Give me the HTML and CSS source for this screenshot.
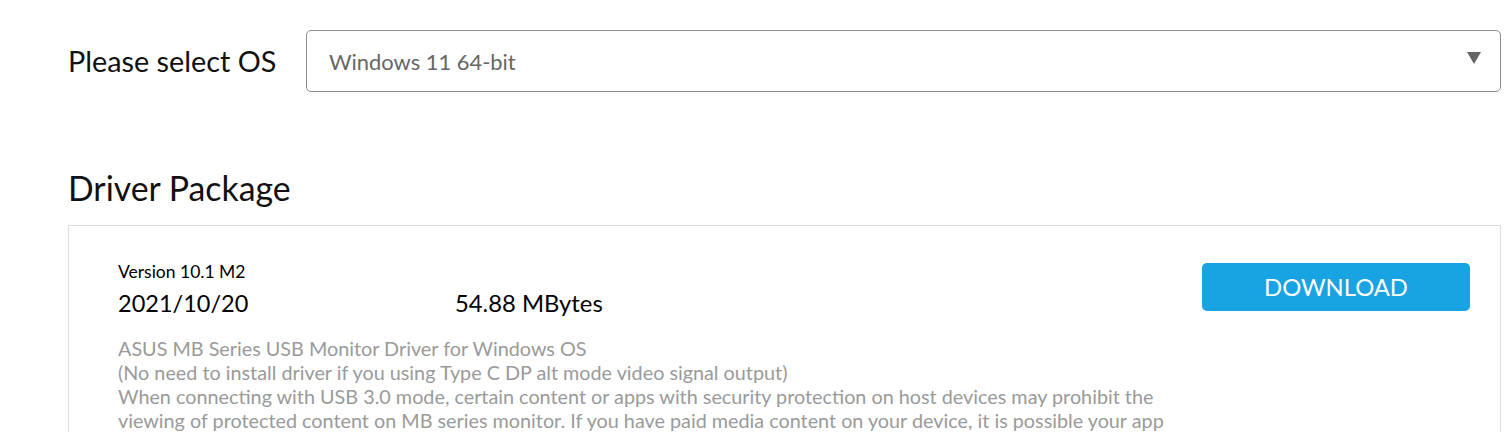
FILE: index.html
```html
<!DOCTYPE html>
<html lang="en">
<head>
<meta charset="utf-8">
<title>Driver Download</title>
<link rel="stylesheet" href="styles.css">
</head>
<body>
<div class="page">
  <div class="os-row">
    <label class="os-label">Please select OS</label>
    <div class="select">
      <span class="select-value">Windows 11 64-bit</span>
      <svg class="select-arrow" width="14" height="12" viewBox="0 0 14 12"><path d="M0 0H14L7 12Z" fill="#666"/></svg>
    </div>
  </div>
  <h2 class="section-title">Driver Package</h2>
  <div class="card">
    <div class="card-head">
      <div class="meta">
        <div class="version">Version 10.1 M2</div>
        <div class="meta-row">
          <span class="date">2021/10/20</span>
          <span class="size">54.88 MBytes</span>
        </div>
      </div>
      <button class="download">DOWNLOAD</button>
    </div>
    <div class="desc">
      ASUS MB Series USB Monitor Driver for Windows OS<br>
      (No need to install driver if you using Type C DP alt mode video signal output)<br>
      When connecting with USB 3.0 mode, certain content or apps with security protection on host devices may prohibit the<br>
      viewing of protected content on MB series monitor. If you have paid media content on your device, it is possible your app
    </div>
  </div>
</div>
</body>
</html>
```
FILE: styles.css
```css
html, body {
  margin: 0;
  padding: 0;
  background: #fff;
  overflow: hidden;
}
body {
  font-family: "Lato", "Noto Sans", sans-serif;
  color: #000;
}
.page {
  padding: 30px 11px 0 68px;
}
.os-row {
  display: flex;
  align-items: center;
}
.os-label {
  width: 238px;
  flex: none;
  font-size: 28.8px;
  color: #111;
}
.select {
  flex: 1;
  height: 62px;
  box-sizing: border-box;
  border: 1px solid #8c8c8c;
  border-radius: 5px;
  display: flex;
  align-items: center;
  justify-content: space-between;
  padding: 0 19px 0 22px;
}
.select-value {
  font-size: 21.9px;
  color: #666;
}
.select-arrow {
  display: block;
  margin-top: -6px;
}
.section-title {
  margin: 76px 0 0;
  font-weight: normal;
  font-size: 33.8px;
  line-height: 40px;
  color: #111;
}
.card {
  margin-top: 17px;
  border: 1px solid #ddd;
  padding: 36px 30px 0 49px;
  height: 300px;
}
.card-head {
  display: flex;
  justify-content: space-between;
  align-items: flex-start;
}
.version {
  font-size: 17.5px;
  line-height: 20px;
}
.meta-row {
  display: flex;
  font-size: 23.5px;
  line-height: 32px;
  margin-top: 5px;
}
.date {
  width: 337px;
}
.size {
  font-size: 23.8px;
}
.download {
  margin-top: 1px;
  width: 268px;
  height: 48px;
  border: none;
  border-radius: 5px;
  background: #18a3e2;
  color: #fff;
  font-family: inherit;
  font-size: 23.8px;
  padding: 0;
}
.desc {
  margin-top: 17px;
  font-size: 19.8px;
  line-height: 24px;
  color: #9a9a9a;
}
```
